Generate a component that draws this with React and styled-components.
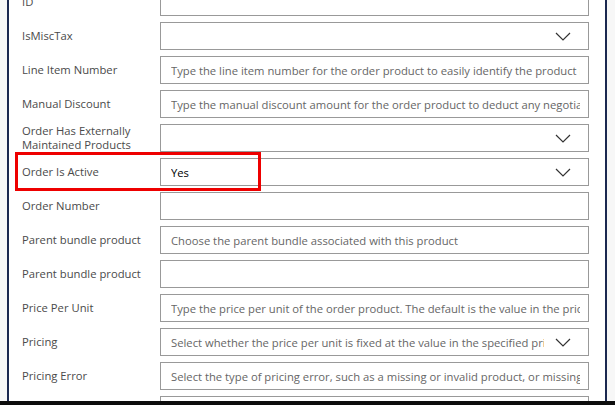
import styled, { createGlobalStyle } from "styled-components";

const GlobalStyle = createGlobalStyle`
  html, body {
    margin: 0;
    padding: 0;
    background: #f7f7f7;
  }
  * {
    box-sizing: border-box;
  }
`;

const fields = [
  { label: "ID" },
  { label: "IsMiscTax", select: true },
  {
    label: "Line Item Number",
    placeholder:
      "Type the line item number for the order product to easily identify the product in the order details",
  },
  {
    label: "Manual Discount",
    placeholder:
      "Type the manual discount amount for the order product to deduct any negotiated or other savings",
  },
  { label: "Order Has Externally Maintained Products", select: true },
  { label: "Order Is Active", select: true, value: "Yes", highlight: true },
  { label: "Order Number" },
  {
    label: "Parent bundle product",
    placeholder: "Choose the parent bundle associated with this product",
  },
  { label: "Parent bundle product" },
  {
    label: "Price Per Unit",
    placeholder:
      "Type the price per unit of the order product. The default is the value in the price list",
  },
  {
    label: "Pricing",
    select: true,
    placeholder:
      "Select whether the price per unit is fixed at the value in the specified price list or can be overridden",
  },
  {
    label: "Pricing Error",
    placeholder:
      "Select the type of pricing error, such as a missing or invalid product, or missing quantity",
  },
  { label: "Product Description" },
];

const Chevron = () => (
  <svg width="16" height="9" viewBox="0 0 16 9">
    <polyline
      points="1,1 8,8 15,1"
      fill="none"
      stroke="#333"
      strokeWidth="1.2"
    />
  </svg>
);

export default function App() {
  return (
    <>
      <GlobalStyle />
      <Screen>
        <Panel>
          <Form>
            {fields.map((f, i) => (
              <Row key={i}>
                {f.highlight && <Highlight />}
                <Label>{f.label}</Label>
                {f.select ? (
                  <SelectBox>
                    <SelectText $filled={!!f.value}>
                      {f.value || f.placeholder || ""}
                    </SelectText>
                    <ChevronWrap>
                      <Chevron />
                    </ChevronWrap>
                  </SelectBox>
                ) : (
                  <TextInput readOnly placeholder={f.placeholder || ""} />
                )}
              </Row>
            ))}
          </Form>
        </Panel>
        <BottomBar />
      </Screen>
    </>
  );
}

const Screen = styled.div`
  width: 615px;
  height: 405px;
  display: flex;
  flex-direction: column;
  overflow: hidden;
  font-family: "Open Sans", "Liberation Sans", sans-serif;
`;

const Panel = styled.div`
  flex: 1;
  margin: 0 8px 0 7px;
  background: #ffffff;
  border-left: 2px solid #1b2850;
  border-right: 2px solid #1b2850;
  overflow: hidden;
`;

const Form = styled.div`
  display: flex;
  flex-direction: column;
  gap: 6px;
  margin-top: -12px;
  padding: 0 16px 0 13px;
`;

const Row = styled.div`
  position: relative;
  display: flex;
  align-items: center;
  height: 28px;
`;

const Highlight = styled.div`
  position: absolute;
  left: -7px;
  top: -6px;
  width: 246px;
  height: 39px;
  border: 3px solid #ee0000;
  pointer-events: none;
`;

const Label = styled.div`
  width: 138px;
  flex-shrink: 0;
  padding-right: 8px;
  font-size: 11.25px;
  line-height: 14px;
  color: #4a4a4a;
`;

const TextInput = styled.input`
  flex: 1;
  min-width: 0;
  height: 28px;
  border: 1px solid #999;
  border-radius: 0;
  background: #fff;
  padding: 0 8px 0 10px;
  font-family: inherit;
  font-size: 11.25px;
  color: #000;
  outline: none;

  &::placeholder {
    color: #666;
    opacity: 1;
  }
`;

const SelectBox = styled.div`
  flex: 1;
  min-width: 0;
  height: 28px;
  border: 1px solid #999;
  background: #fff;
  display: flex;
  align-items: center;
  padding-left: 10px;
`;

const SelectText = styled.div`
  flex: 1;
  min-width: 0;
  white-space: nowrap;
  overflow: hidden;
  font-size: 11.25px;
  color: ${(p) => (p.$filled ? "#000" : "#666")};
`;

const ChevronWrap = styled.div`
  width: 44px;
  flex-shrink: 0;
  display: flex;
  justify-content: center;
  padding-right: 8px;
  padding-left: 2px;
`;

const BottomBar = styled.div`
  height: 4px;
  flex-shrink: 0;
  background: #0d0d0d;
`;
